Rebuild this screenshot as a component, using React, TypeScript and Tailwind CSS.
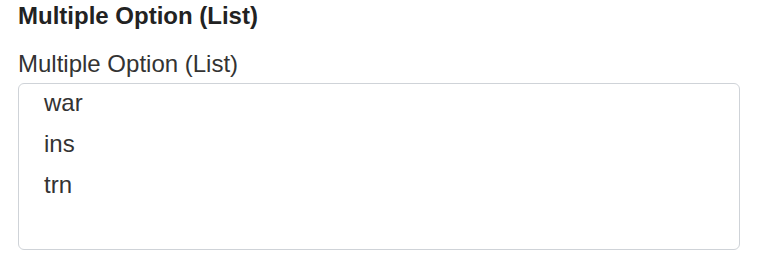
import React from 'react';

const App: React.FC = () => {
  const options = ['war', 'ins', 'trn'];

  return (
    <div className="w-[758px] h-[278px] bg-white px-[18px] pt-[2px] font-['Liberation_Sans',Arial,sans-serif] text-[#333333]">
      <h3 className="font-bold text-[24px] leading-[28px] text-[#222222] mb-[20px]">
        Multiple Option (List)
      </h3>
      <label className="block text-[24px] leading-[28px] text-[#333333] mb-[5px]">
        Multiple Option (List)
      </label>
      <div className="w-[722px] h-[167px] border border-[#cfd3d8] rounded-[6px] pl-[25px]">
        {options.map((opt) => (
          <div key={opt} className="h-[41px] leading-[37px] text-[24px] text-[#333333]">
            {opt}
          </div>
        ))}
      </div>
    </div>
  );
};

export default App;
